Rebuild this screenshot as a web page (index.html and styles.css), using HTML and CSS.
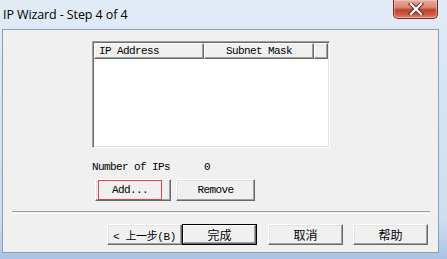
FILE: index.html
```html
<!DOCTYPE html>
<html>
<head>
<meta charset="utf-8">
<link rel="stylesheet" href="styles.css">
</head>
<body>
<div class="window">
  <div class="titlebar">
    <span class="title">IP Wizard - Step 4 of 4</span>
    <div class="close">
      <svg width="16" height="12" viewBox="0 0 16 12">
        <path d="M3 1 L13 11 M13 1 L3 11" stroke="#5a1a12" stroke-width="4.2" stroke-linecap="square"/>
        <path d="M3 1 L13 11 M13 1 L3 11" stroke="#ffffff" stroke-width="2.4" stroke-linecap="square"/>
      </svg>
    </div>
  </div>
  <div class="frame">
    <div class="client">
      <div class="content">
        <div class="listview">
          <div class="lv-header">
            <div class="col c1">IP Address</div>
            <div class="col c2">Subnet Mask</div>
            <div class="col c3"></div>
          </div>
          <div class="lv-body"></div>
        </div>
        <div class="count-row">
          <span class="count-label">Number of IPs</span>
          <span class="count-value">0</span>
        </div>
        <div class="actions">
          <button class="btn add"><span class="focus">Add...</span></button>
          <button class="btn remove">Remove</button>
        </div>
      </div>
      <div class="separator"></div>
      <div class="nav">
        <button class="btn nav-btn back">&lt; 上一步(B)</button>
        <button class="btn nav-btn default">完成</button>
        <button class="btn nav-btn cancel">取消</button>
        <button class="btn nav-btn help">帮助</button>
      </div>
    </div>
  </div>
</div>
</body>
</html>
```
FILE: styles.css
```css
html, body {
  margin: 0;
  padding: 0;
  background: #ffffff;
}
.window {
  width: 447px;
  height: 259px;
  display: flex;
  flex-direction: column;
  background: linear-gradient(180deg, #e2ecf7 0%, #d8e5f3 30%, #cfdeef 85%, #a9c4e2 100%);
  overflow: hidden;
}
.titlebar {
  height: 29px;
  display: flex;
  align-items: flex-start;
  justify-content: space-between;
  flex: none;
}
.title {
  font-family: "Open Sans", "Noto Sans", sans-serif;
  font-size: 12.5px;
  color: #000;
  margin: 7px 0 0 3px;
  line-height: 16px;
  letter-spacing: -0.1px;
}
.close {
  width: 45px;
  height: 19px;
  margin-right: 9px;
  box-sizing: border-box;
  border: 1px solid #6e2a22;
  border-top: none;
  border-radius: 0 0 5px 5px;
  background: linear-gradient(180deg, #e9aa9a 0%, #d98a78 40%, #c0432e 55%, #cf5a44 80%, #e08a6f 100%);
  display: flex;
  align-items: center;
  justify-content: center;
  box-shadow: inset 0 0 0 1px rgba(255,210,200,0.5);
}
.frame {
  flex: 1;
  display: flex;
  padding: 0 8px 6px 2px;
  min-height: 0;
}
.client {
  flex: 1;
  border: 1px solid #8e9eb2;
  background: #f0f0f0;
  display: flex;
  flex-direction: column;
  font-family: "Liberation Mono", monospace;
  font-size: 11px;
  letter-spacing: -0.6px;
  color: #000;
}
.content {
  padding-left: 89px;
  display: flex;
  flex-direction: column;
}
.listview {
  margin-top: 11px;
  width: 238px;
  height: 107px;
  box-sizing: border-box;
  border-top: 1px solid #a0a0a0;
  border-left: 1px solid #a0a0a0;
  border-right: 1px solid #ffffff;
  border-bottom: 1px solid #ffffff;
  box-shadow: inset 1px 1px 0 #696969, inset -1px -1px 0 #e3e3e3;
  background: #ffffff;
  display: flex;
  flex-direction: column;
  padding: 1px;
}
.lv-header {
  display: flex;
  height: 16px;
  flex: none;
}
.col {
  box-sizing: border-box;
  height: 16px;
  line-height: 14px;
  background: #f0f0f0;
  border-top: 1px solid #ffffff;
  border-left: 1px solid #ffffff;
  border-right: 1px solid #696969;
  border-bottom: 1px solid #696969;
  box-shadow: inset -1px -1px 0 #a0a0a0;
  white-space: nowrap;
}
.c1 {
  width: 110px;
  padding-left: 4px;
}
.c2 {
  width: 110px;
  text-align: center;
}
.c3 {
  flex: 1;
}
.lv-body {
  flex: 1;
}
.count-row {
  margin-top: 12px;
  height: 14px;
  line-height: 14px;
  display: flex;
}
.count-label {
  width: 112px;
}
.actions {
  margin-top: 5px;
  display: flex;
  margin-left: 3px;
}
.btn {
  box-sizing: border-box;
  height: 22px;
  margin: 0;
  padding: 0;
  background: #f0f0f0;
  border-top: 1px solid #ffffff;
  border-left: 1px solid #ffffff;
  border-right: 1px solid #696969;
  border-bottom: 1px solid #696969;
  box-shadow: inset -1px -1px 0 #a0a0a0, inset 1px 1px 0 #e3e3e3;
  font-family: "Liberation Mono", monospace;
  font-size: 11px;
  letter-spacing: -0.6px;
  color: #000;
  display: flex;
  align-items: center;
  justify-content: center;
}
.add {
  width: 76px;
  justify-content: flex-start;
  padding-left: 2px;
}
.focus {
  display: flex;
  align-items: center;
  justify-content: center;
  width: 64px;
  height: 20px;
  box-sizing: border-box;
  border: 1px solid #e0404a;
}
.remove {
  width: 79px;
  margin-left: 5px;
}
.separator {
  margin: 10px 8px 0 9px;
  height: 1px;
  border-top: 1px solid #a0a0a0;
  border-bottom: 1px solid #ffffff;
}
.nav {
  margin-top: 10px;
  padding-left: 104px;
  display: flex;
}
.nav-btn {
  width: 75px;
  height: 21px;
  font-family: "Noto Sans CJK SC", sans-serif;
  font-size: 12px;
  letter-spacing: 0;
}
.back {
  font-family: "Liberation Mono", "Noto Sans CJK SC", monospace;
  font-size: 11px;
  letter-spacing: -0.4px;
}
.default {
  border: 1px solid #000000;
  box-shadow: inset -1px -1px 0 #696969, inset 1px 1px 0 #ffffff, inset -2px -2px 0 #a0a0a0;
}
.cancel {
  margin-left: 11px;
}
.help {
  margin-left: 10px;
}
```
